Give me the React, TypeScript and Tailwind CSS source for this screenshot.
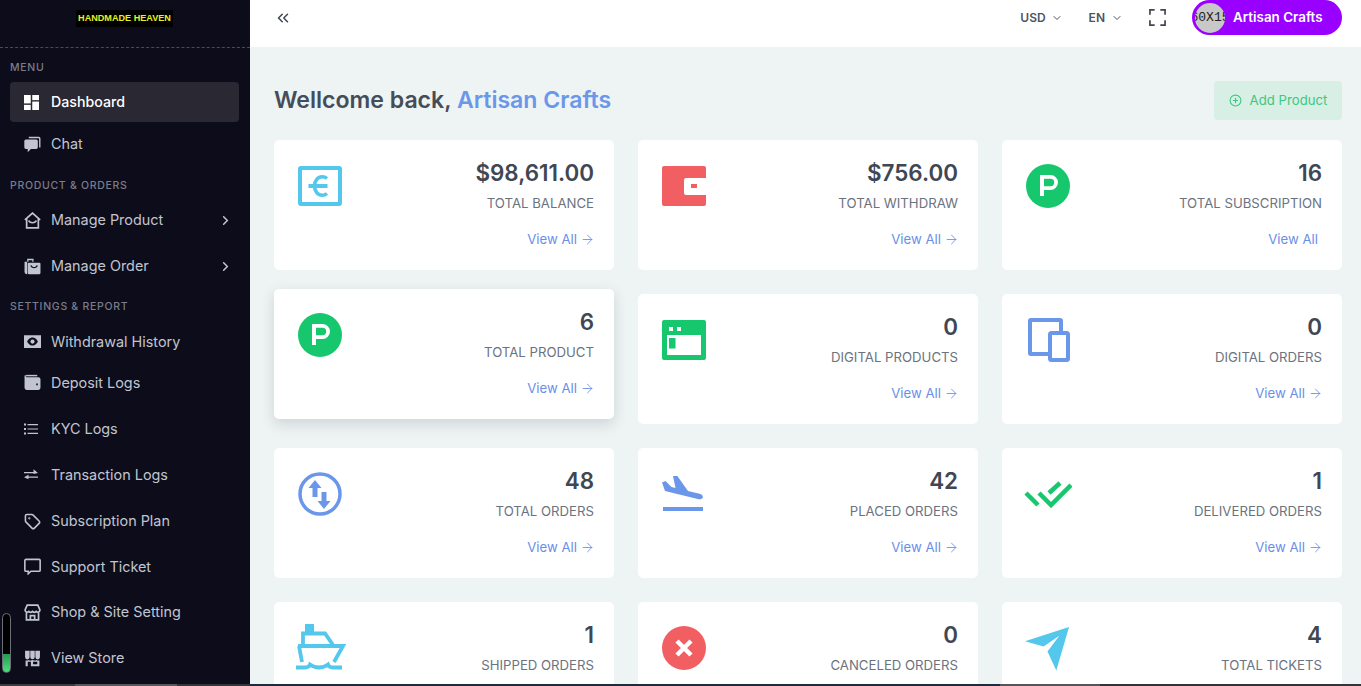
import { ReactNode } from 'react';
import {
  ChevronRight, ChevronDown, ChevronsLeft, ArrowRight, CirclePlus, Tag,
} from 'lucide-react';

const iconCls = 'w-[17px] h-[17px]';

// sidebar icons
const DashIcon = () => (
  <svg viewBox="0 0 16 16" className="w-[15px] h-[15px]" fill="currentColor">
    <rect x="0" y="0" width="7.2" height="9" />
    <rect x="8.8" y="0" width="7.2" height="5.5" />
    <rect x="0" y="10.5" width="7.2" height="5.5" />
    <rect x="8.8" y="7" width="7.2" height="9" />
  </svg>
);
const ChatIcon = () => (
  <svg viewBox="0 0 16 16" className={iconCls} fill="currentColor">
    <path d="M4.500.8h9.500a1.500 1.500 0 0 1 1.500 1.500v8.500h-1.300V2.100H4.500z" />
    <path d="M1.800 3.200h9.700a1.500 1.500 0 0 1 1.500 1.500v6a1.500 1.500 0 0 1-1.500 1.500H6.500l-3 3v-3H1.800a1.500 1.500 0 0 1-1.500-1.500v-6a1.500 1.500 0 0 1 1.500-1.500z" />
  </svg>
);
const HomeMailIcon = () => (
  <svg viewBox="0 0 16 16" className={iconCls} fill="none" stroke="currentColor" strokeWidth="1.600">
    <path d="M.8 7.500 8 1l7.200 6.500M2.500 6v9h11V6" />
    <path d="M4.500 8c1 2.800 6 2.800 7 0" />
  </svg>
);
const BagIcon = () => (
  <svg viewBox="0 0 16 16" className={iconCls} fill="currentColor">
    <path d="M3 .8h6v2.700H7.800V2H4.200v1.500H3z" />
    <path d="M.5 3.500h2.500v11.700h-.5a2 2 0 0 1-2-2z" />
    <path fillRule="evenodd" d="M4.500 4.500h10a1 1 0 0 1 1 1v8.700a1 1 0 0 1-1 1h-10a1 1 0 0 1-1-1V5.500a1 1 0 0 1 1-1zm1.500 2.600c.7 3.400 6.300 3.400 7 0l-1.100-.3c-.6 2.300-4.200 2.300-4.800 0z" />
  </svg>
);
const EyeCashIcon = () => (
  <svg viewBox="0 0 16 12" className="w-[17px] h-[13px]" fill="currentColor">
    <path fillRule="evenodd" d="M0 0h16v12H0zm8 2.200C5.500 2.200 3.500 4.500 3 6c.5 1.500 2.500 3.800 5 3.800S12.500 7.500 13 6c-.5-1.500-2.500-3.800-5-3.800zM8 4a2 2 0 1 1 0 4 2 2 0 0 1 0-4z" />
  </svg>
);
const WalletIcon = () => (
  <svg viewBox="0 0 16 16" className={iconCls} fill="currentColor">
    <path d="M2 .8h10.500v1.400H2z" />
    <path fillRule="evenodd" d="M1.500 1c-.6 0-1 .5-1 1v11a2 2 0 0 0 2 2h11a2 2 0 0 0 2-2V5a2 2 0 0 0-2-2H2.500c-.5 0-.8-.2-1-2zM11.500 9h1.500v1.500h-1.500z" />
  </svg>
);
const ListIcon = () => (
  <svg viewBox="0 0 14 12" className="w-[14px] h-[12px]" fill="currentColor">
    <path d="M0 .5h2v2H0zM0 5h2v2H0zM0 9.500h2v2H0zM3.500 1h10.500v1.200H3.500zM3.500 5.400h10.500v1.200H3.500zM3.500 9.800h10.500V11H3.500z" />
  </svg>
);
const SwapIcon = () => (
  <svg viewBox="0 0 14 12" className="w-[14px] h-[12px]" fill="currentColor">
    <path d="M0 3h9.500V.2L14 3.900 9.500 5V4.300H0zM14 7.500v1.300H4.500v1.500L0 8.200 4.500 5.700v1.800z" />
  </svg>
);
const TicketIcon = () => (
  <svg viewBox="0 0 16 16" className={iconCls} fill="none" stroke="currentColor" strokeWidth="1.500">
    <path d="M1.800 1.300h12.400a1 1 0 0 1 1 1v9.200a1 1 0 0 1-1 1H6.500l-2.500 2.300v-2.300H1.800a1 1 0 0 1-1-1V2.300a1 1 0 0 1 1-1z" />
  </svg>
);
const ShopIcon = () => (
  <svg viewBox="0 0 16 16" className={iconCls} fill="none" stroke="currentColor" strokeWidth="1.600">
    <path d="M3 1h10l2 4.500a2 2 0 0 1-3.500 1.500 2.500 2.500 0 0 1-3.500 0 2.500 2.500 0 0 1-3.500 0A2 2 0 0 1 1 5.500z" />
    <path d="M2.300 8v7h11.400V8M6 15v-4h4v4" />
  </svg>
);
const StoreIcon = () => (
  <svg viewBox="0 0 16 16" className={iconCls} fill="currentColor">
    <path d="M1 .8h4.300v5.900a2.150 2.150 0 0 1-4.300 0zM5.900.8h4.200v5.900a2.100 2.100 0 0 1-4.200 0zM10.700.8H15v5.900a2.150 2.150 0 0 1-4.300 0z" />
    <path fillRule="evenodd" d="M1.500 9.800c1.100.2 2.100 0 2.800-.5 1 .8 2.600.9 3.700.2 1.100.7 2.700.6 3.700-.2.700.5 1.700.7 2.800.5v5.400h-13zM3.500 11v4.200h3V11zm5 0v2.500h4V11z" />
  </svg>
);

// card icons
const EuroIcon = () => (
  <svg viewBox="0 0 44 40" className="w-[44px] h-[40px]">
    <rect x="2" y="2" width="40" height="36" rx="1" fill="none" stroke="#53c7ec" strokeWidth="4" />
    <path d="M29 12.500c-1.400-1.200-3-1.800-4.800-1.800-4.300 0-7.700 4-7.700 9.300s3.400 9.300 7.700 9.300c1.800 0 3.400-.6 4.800-1.800" fill="none" stroke="#53c7ec" strokeWidth="3.600" />
    <path d="M10.500 18h19v4h-19z" fill="#53c7ec" />
  </svg>
);
const RedWalletIcon = () => (
  <svg viewBox="0 0 44 40" className="w-[44px] h-[40px]">
    <path fillRule="evenodd" fill="#f15f62" d="M2 0h40a2 2 0 0 1 2 2v10H24a2 2 0 0 0-2 2v13a2 2 0 0 0 2 2h20v9a2 2 0 0 1-2 2H2a2 2 0 0 1-2-2V2a2 2 0 0 1 2-2z" />
    <rect x="29" y="18" width="6" height="4" fill="#f15f62" />
  </svg>
);
const PIcon = () => (
  <div className="w-[44px] h-[44px] -mt-[2px] rounded-full bg-[#16c76d]">
    <svg viewBox="0 0 44 44" className="w-[44px] h-[44px]">
      <path fillRule="evenodd" fill="#fff" d="M14 11h10.500a7.500 7.500 0 0 1 0 15H18v6h-4zm4 3.800v7.400h6.500a3.700 3.700 0 0 0 0-7.400z" />
    </svg>
  </div>
);
const BrowserIcon = () => (
  <svg viewBox="0 0 44 40" className="w-[44px] h-[40px]">
    <path fillRule="evenodd" fill="#16c76d" d="M2 0h40a2 2 0 0 1 2 2v36a2 2 0 0 1-2 2H2a2 2 0 0 1-2-2V2a2 2 0 0 1 2-2zm3 15v20h34V15z" />
    <rect x="7" y="7" width="4" height="4" fill="#fff" />
    <rect x="15" y="7" width="4" height="4" fill="#fff" />
    <rect x="7" y="18" width="6.500" height="10.500" fill="#16c76d" />
  </svg>
);
const DevicesIcon = () => (
  <svg viewBox="0 0 44 44" className="w-[44px] h-[44px] -mt-[2px]" fill="#fff" stroke="#6a97ea" strokeWidth="4" strokeLinejoin="round">
    <rect x="4" y="2" width="31" height="34" rx="1" />
    <rect x="24" y="15" width="18" height="27" rx="1.500" />
  </svg>
);
const UpDownIcon = () => (
  <svg viewBox="0 0 44 44" className="w-[44px] h-[44px] -mt-[2px]">
    <circle cx="22" cy="22" r="20" fill="none" stroke="#6a97ea" strokeWidth="3.500" />
    <path fill="#6a97ea" d="M17 8l6.500 8h-4v9h-5v-9h-4zM23.500 20h5v9h4L26 37l-6.500-8h4z" />
  </svg>
);
const PlaneIcon = () => (
  <svg viewBox="0 0 42 36" className="w-[42px] h-[36px] mt-[2px]">
    <path fill="#6a97ea" d="M0 6.500 3.500 5 9.500 11 13.500 12 11 0l4-.5L26 15l11.500 2.800c2.500.6 3.700 2.300 3.300 3.700-.4 1.400-2.300 2.100-4 1.700L3 15zM1 31h40v4H1z" />
  </svg>
);
const DoubleCheckIcon = () => (
  <svg viewBox="0 0 48 28" className="w-[48px] h-[28px] mt-[6px] -ml-[2px]" fill="none" stroke="#16c76d" strokeWidth="4.500">
    <path d="M2 13l12 12M15 13l12 12L47 5M25 13l11-10" />
  </svg>
);
const ShipIcon = () => (
  <svg viewBox="0 0 50 46" className="w-[50px] h-[46px] -mt-[4px] -ml-[2px]" fill="none" stroke="#53c7ec" strokeWidth="3.800">
    <path fill="#53c7ec" stroke="none" d="M9 0h9v8H9z" />
    <path d="M7 22V9.500h22L37 21" />
    <path d="M2 22h45l-9 16M3 22l3 16" />
    <path d="M0 43.500h9c4 0 5-3 5-3s4 3 9 3 9-3 9-3 1 3 5 3h9" />
  </svg>
);
const XIcon = () => (
  <svg viewBox="0 0 44 44" className="w-[44px] h-[44px] -mt-[2px]">
    <circle cx="22" cy="22" r="22" fill="#f15f62" />
    <path d="M15 15l14 14M29 15 15 29" stroke="#fff" strokeWidth="4.500" />
  </svg>
);
const SendIcon = () => (
  <svg viewBox="0 0 46 46" className="w-[45px] h-[45px] -mt-[1px] -ml-[1px]">
    <path fill="#53c7ec" d="M45 0 0 14.500l19 5.500L35 9 23 25l9 19.500z" />
  </svg>
);

type NavItem = { label: string; icon: ReactNode; arrow?: boolean; h?: string };

const settingsNav: NavItem[] = [
  { label: 'Withdrawal History', icon: <EyeCashIcon />, h: 'h-[41px]' },
  { label: 'Deposit Logs', icon: <WalletIcon />, h: 'h-[41px] mb-[3px]' },
  { label: 'KYC Logs', icon: <ListIcon /> },
  { label: 'Transaction Logs', icon: <SwapIcon /> },
  { label: 'Subscription Plan', icon: <Tag size={17} strokeWidth={2.200} /> },
  { label: 'Support Ticket', icon: <TicketIcon />, h: 'h-[45px]' },
  { label: 'Shop & Site Setting', icon: <ShopIcon /> },
  { label: 'View Store', icon: <StoreIcon /> },
];

function SideLink({ label, icon, arrow, h = 'h-[46px]' }: NavItem) {
  return (
    <div className={`flex items-center ml-[10px] mr-[11px] pl-[14px] pr-[6px] text-[#c0c5cf] ${h}`}>
      <span className="w-[27px] flex items-center shrink-0">{icon}</span>
      <span className="text-[14.4px] flex-1">{label}</span>
      {arrow && <ChevronRight size={15} strokeWidth={2.500} />}
    </div>
  );
}

function SectionTitle({ children, cls }: { children: ReactNode; cls: string }) {
  return <p className={`pl-[10px] text-[10.5px] font-medium tracking-[0.7px] text-[#7a7d8a] leading-[14px] ${cls}`}>{children}</p>;
}

type Stat = { value: string; label: string; icon: ReactNode; noArrow?: boolean; lifted?: boolean };

const stats: Stat[] = [
  { value: '$98,611.00', label: 'TOTAL BALANCE', icon: <EuroIcon /> },
  { value: '$756.00', label: 'TOTAL WITHDRAW', icon: <RedWalletIcon /> },
  { value: '16', label: 'TOTAL SUBSCRIPTION', icon: <PIcon />, noArrow: true },
  { value: '6', label: 'TOTAL PRODUCT', icon: <PIcon />, lifted: true },
  { value: '0', label: 'DIGITAL PRODUCTS', icon: <BrowserIcon /> },
  { value: '0', label: 'DIGITAL ORDERS', icon: <DevicesIcon /> },
  { value: '48', label: 'TOTAL ORDERS', icon: <UpDownIcon /> },
  { value: '42', label: 'PLACED ORDERS', icon: <PlaneIcon /> },
  { value: '1', label: 'DELIVERED ORDERS', icon: <DoubleCheckIcon /> },
  { value: '1', label: 'SHIPPED ORDERS', icon: <ShipIcon /> },
  { value: '0', label: 'CANCELED ORDERS', icon: <XIcon /> },
  { value: '4', label: 'TOTAL TICKETS', icon: <SendIcon /> },
];

function StatCard({ value, label, icon, noArrow, lifted }: Stat) {
  return (
    <div className={`bg-white rounded-[5px] h-[130px] shrink-0 flex justify-between pl-[24px] pr-[20px] pt-[20px] ${lifted ? '-translate-y-[5px] shadow-[0_5px_14px_rgba(60,80,90,0.18)]' : ''}`}>
      <div className="pt-[6px] h-[50px]">{icon}</div>
      <div className="text-right">
        <h4 className="text-[22.4px] leading-[26px] font-semibold text-[#3f4753]">{value}</h4>
        <p className="mt-[9px] text-[13.2px] leading-[17px] text-[#6b7280]">{label}</p>
        <div className={`mt-[19px] flex items-center justify-end gap-[3px] text-[13.2px] leading-[17px] text-[#6a8fe8] ${noArrow ? 'pr-[4px]' : ''}`}>
          View All {!noArrow && <ArrowRight size={15} strokeWidth={1.400} className="-mr-[1px]" />}
        </div>
      </div>
    </div>
  );
}

export default function App() {
  return (
    <div className="h-[686px] w-[1361px] overflow-hidden flex flex-col font-['Inter',sans-serif]">
      <div className="flex flex-1 min-h-0">
        <aside className="relative w-[250px] shrink-0 bg-[#0d0c1b] overflow-hidden">
          <div className="h-[48px] border-b border-dashed border-[#4a4a58] pt-[10px] flex justify-center">
            <span className="bg-black h-[17px] px-[2px] text-[9.1px] leading-[17px] font-bold text-[#e3f02a] font-['Liberation_Sans',sans-serif] -ml-[1px]">HANDMADE HEAVEN</span>
          </div>
          <SectionTitle cls="mt-[13px] mb-[7px]">MENU</SectionTitle>
          <div className="flex items-center h-[40px] ml-[10px] mr-[11px] pl-[14px] rounded-[4px] bg-[#292833] text-white">
            <span className="w-[27px] flex items-center shrink-0"><DashIcon /></span>
            <span className="text-[14.2px] font-medium">Dashboard</span>
          </div>
          <SideLink label="Chat" icon={<ChatIcon />} h="h-[44px]" />
          <SectionTitle cls="mt-[13px] mb-[4px]">PRODUCT &amp; ORDERS</SectionTitle>
          <SideLink label="Manage Product" icon={<HomeMailIcon />} arrow />
          <SideLink label="Manage Order" icon={<BagIcon />} arrow />
          <SectionTitle cls="mt-[11px] mb-[7px]">SETTINGS &amp; REPORT</SectionTitle>
          {settingsNav.map((n) => <SideLink key={n.label} {...n} />)}
          {/* little level meter over the sidebar edge */}
          <div className="absolute left-[2px] top-[613px] w-[9px] h-[60px] rounded-full border border-[#6d6f76] bg-black overflow-hidden flex flex-col justify-end">
            <div className="h-[18px] bg-gradient-to-b from-[#1f9e4d] to-[#4fe07e]" />
          </div>
        </aside>

        <div className="flex-1 min-w-0 flex flex-col bg-[#eef3f3]">
          <header className="h-[47px] shrink-0 bg-white flex items-center pl-[24px] pr-[19px] pb-[12px] text-[#4b5563]">
            <ChevronsLeft size={18} strokeWidth={2} className="text-[#3f4753]" />
            <div className="ml-auto flex items-center text-[12px] font-semibold">
              <span>USD</span>
              <ChevronDown size={12} className="ml-[5px]" />
              <span className="ml-[26px]">EN</span>
              <ChevronDown size={12} className="ml-[6px]" />
              <svg viewBox="0 0 18 18" className="ml-[26px] w-[17px] h-[17px]" fill="none" stroke="#3f4753" strokeWidth="1.800">
                <path d="M1 6V1h5M12 1h5v5M17 12v5h-5M6 17H1v-5" />
              </svg>
              <div className="ml-[26px] h-[35px] w-[150px] rounded-full bg-[#9900ff] flex items-center pl-[3px] text-white">
                <span className="w-[30px] h-[30px] rounded-full bg-[#c8c8c8] overflow-hidden flex items-center justify-center shrink-0 text-[#222] font-['Liberation_Mono',monospace] text-[13px] font-normal whitespace-nowrap">60X15</span>
                <span className="ml-[8px] text-[13.4px] font-semibold whitespace-nowrap">Artisan Crafts</span>
              </div>
            </div>
          </header>

          <main className="flex-1 min-h-0 pl-[24px] pr-[19px] pt-[34px]">
            <div className="flex items-center justify-between h-[39px] mb-[20px]">
              <h3 className="text-[23.07px] font-semibold text-[#454d59]">
                Wellcome back, <span className="text-[#6a97ea]">Artisan Crafts</span>
              </h3>
              <div className="w-[128px] h-[39px] rounded-[4px] bg-[#d7efe5] text-[#3fc682] text-[13.2px] flex items-center justify-center gap-[8px]">
                <CirclePlus size={13} />
                Add Product
              </div>
            </div>
            <div className="grid grid-cols-3 gap-[24px]">
              {stats.map((s) => <StatCard key={s.label} {...s} />)}
            </div>
          </main>
        </div>
      </div>
      {/* strip along the bottom edge of the window */}
      <div className="h-[2px] shrink-0 flex">
        <div className="w-[75px] bg-[#3a3c40]" />
        <div className="w-[102px] bg-[#56585c]" />
        <div className="w-[73px] bg-[#33353a]" />
        <div className="w-[750px] bg-[#1d2a40]" />
        <div className="w-[100px] bg-[#55565c]" />
        <div className="flex-1 bg-[#333438]" />
      </div>
    </div>
  );
}
